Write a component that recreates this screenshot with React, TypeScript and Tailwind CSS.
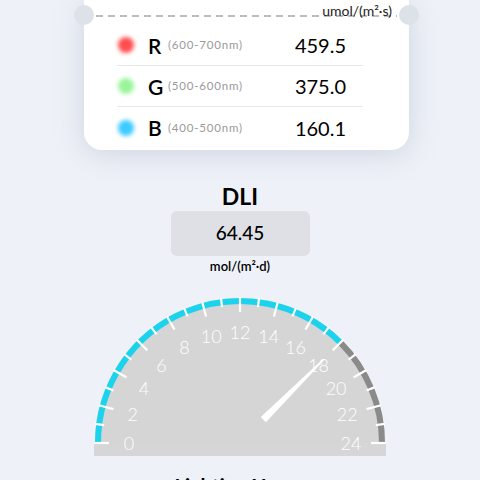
const rows = [
  { key: 'R', range: '(600-700nm)', value: '459.5', dot: 'bg-[#ff4d4f]' },
  { key: 'G', range: '(500-600nm)', value: '375.0', dot: 'bg-[#9af59a]' },
  { key: 'B', range: '(400-500nm)', value: '160.1', dot: 'bg-[#3dcaff]' },
]

const CX = 150
const CY = 150
const VALUE = 18

function pt(v: number, r: number) {
  const a = Math.PI - (v / 24) * Math.PI
  return [CX + r * Math.cos(a), CY - r * Math.sin(a)]
}

function arc(from: number, to: number, r: number) {
  const [x1, y1] = pt(from, r)
  const [x2, y2] = pt(to, r)
  return `M ${x1} ${y1} A ${r} ${r} 0 0 1 ${x2} ${y2}`
}

function Gauge() {
  const ticks = Array.from({ length: 25 }, (_, i) => i)
  return (
    <svg width="300" height="165" viewBox="0 0 300 165" className="mx-auto block">
      <path d={`M 5 ${CY} A 145 145 0 0 1 295 ${CY} Z`} fill="#d5d5d5" />
      <rect x="4" y={CY} width="292" height="13" fill="#d6d6d6" />
      <path d={arc(0, VALUE, 142)} stroke="#1cd3ee" strokeWidth="6" fill="none" />
      <path d={arc(VALUE, 24, 142)} stroke="#8a8a8a" strokeWidth="6" fill="none" />
      {ticks.map((i) => {
        const [x1, y1] = pt(i, i % 2 === 0 ? 131 : 137)
        const [x2, y2] = pt(i, 146)
        return <line key={i} x1={x1} y1={y1} x2={x2} y2={y2} stroke="#fff" strokeWidth="2.2" />
      })}
      {ticks
        .filter((i) => i % 2 === 0)
        .map((i) => {
          const [x, y] = pt(i, 111)
          return (
            <text
              key={i}
              x={x}
              y={y}
              fill="#fff"
              fontSize="18"
              fontWeight="300"
              textAnchor="middle"
              dominantBaseline="central"
              fontFamily="Lato, sans-serif"
            >
              {i}
            </text>
          )
        })}
      <polygon
        points="33,-3.6 118,-0.8 118,0.8 33,3.6"
        fill="#fff"
        transform={`translate(${CX} ${CY}) rotate(${-(180 - (VALUE / 24) * 180)})`}
      />
    </svg>
  )
}

export default function App() {
  return (
    <div className="h-[480px] w-[480px] overflow-hidden bg-[#eef1f7] font-['Lato',sans-serif] text-black">
      <div className="relative ml-[84px] w-[325px] rounded-b-[18px] bg-white shadow-[0_4px_28px_rgba(170,180,200,0.45)]">
        <div className="absolute left-[-10px] top-[5px] h-5 w-5 rounded-full bg-[#dde1e8]" />
        <div className="absolute right-[-10px] top-[5px] h-5 w-5 rounded-full bg-[#dde1e8]" />
        <div className="flex h-[15px] items-end justify-end pr-[17px]">
          <span className="translate-y-[3px] text-[14px] leading-none text-[#222]">umol/(m²·s)</span>
        </div>
        <div className="mx-3 h-[2px] bg-[repeating-linear-gradient(90deg,#b9bdc5_0_7px,transparent_7px_12px)]" />
        <div className="pb-[2px] pl-[33px] pr-[46px] pt-[8px]">
          {rows.map((r, i) => (
            <div
              key={r.key}
              className={`flex h-[41px] items-center ${i < rows.length - 1 ? 'border-b border-[#e8e8e8]' : ''}`}
            >
              <span className={`ml-[1px] h-4 w-4 rounded-full blur-[2px] ${r.dot}`} />
              <span className="ml-[14px] w-[20px] text-[21px] font-semibold leading-none">{r.key}</span>
              <span className="text-[11.5px] tracking-[0.8px] text-[#9a9a9a]">{r.range}</span>
              <span className="ml-auto mr-[17px] text-[20px] leading-none">{r.value}</span>
            </div>
          ))}
        </div>
      </div>

      <div className="mt-[34px] text-center text-[23px] font-bold leading-[24px]">DLI</div>
      <div className="mx-auto mt-[3px] flex h-[45px] w-[139px] items-center justify-center rounded-md bg-[#dfe0e5] text-[19px] font-medium">
        64.45
      </div>
      <div className="mt-[2px] text-center text-[13px] font-semibold leading-[16px]">mol/(m²·d)</div>

      <div className="mt-[19px]">
        <Gauge />
      </div>

      <div className="mt-[16px] text-center text-[20px] font-bold leading-[24px]">Lighting Hours</div>
    </div>
  )
}
